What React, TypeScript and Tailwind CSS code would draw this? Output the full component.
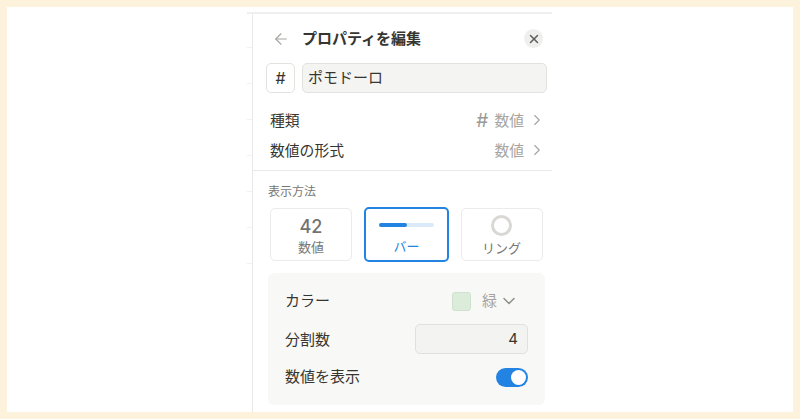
import { ArrowLeft, ChevronDown, ChevronRight, X } from 'lucide-react'

const font = { fontFamily: '"Noto Sans CJK JP", sans-serif' }
const latin = { fontFamily: 'Inter, sans-serif' }

const ticks = [1, 2, 3, 4, 5, 6, 7]

function Row({ label, value, hash }: { label: string; value: string; hash?: boolean }) {
    return (
        <div className="flex h-[30px] items-center justify-between pl-[17px] pr-[2px]">
            <span className="text-[14.8px] text-[#37352f]">{label}</span>
            <span className="flex items-center text-[14.8px] text-[#a5a4a0]">
                {hash && <span className="mr-[6px] text-[19px] leading-none text-[#9b9a97]" style={latin}>#</span>}
                {value}
                <ChevronRight className="ml-[4px] h-[18px] w-[18px]" strokeWidth={1.5} />
            </span>
        </div>
    )
}

export default function App() {
    return (
        <div className="h-[419px] w-[800px] overflow-hidden bg-[#fdf3dc] p-[7px]" style={font}>
            <div className="h-[405px] overflow-hidden bg-white pl-[240px]">
                <div className="flex h-full w-[305px] flex-col pt-[5px]">
                    <div className="h-[2px] bg-[#efefee]" />
                    <div className="flex flex-1">
                        <div className="flex w-[5px] flex-col gap-[35px] pt-[33px]">
                            {ticks.map((t) => (
                                <div key={t} className="h-[1px] bg-[#f1f1f0]" />
                            ))}
                        </div>
                        <div className="flex flex-1 flex-col border-l border-[#e9e9e7] pr-[4px]">
                            <div className="flex h-[49px] items-center pl-[19px] pr-[5px]">
                                <ArrowLeft className="h-[18px] w-[18px] text-[#a5a4a0]" strokeWidth={1.5} />
                                <span className="ml-[12px] flex-1 text-[15px] font-bold text-[#37352f]">プロパティを編集</span>
                                <span className="flex h-[19px] w-[19px] items-center justify-center rounded-full bg-[#efefed] text-[#5f5e5b]">
                                    <X className="h-[14px] w-[14px]" strokeWidth={2.5} />
                                </span>
                            </div>
                            <div className="flex gap-[7px] pl-[13px]">
                                <div className="flex h-[30px] w-[29px] items-center justify-center rounded-[5px] border border-[#e3e2df] text-[16px] text-[#37352f]" style={latin}>#</div>
                                <div className="flex h-[30px] w-[245px] items-center rounded-[5px] border border-[#e3e2df] bg-[#f4f4f2] pb-[1px] pl-[5px] text-[15px] text-[#37352f]">ポモドーロ</div>
                            </div>
                            <div className="mt-[12px]">
                                <Row label="種類" value="数値" hash />
                                <Row label="数値の形式" value="数値" />
                            </div>
                            <div className="-mr-[4px] mt-[5px] h-[1px] bg-[#e9e9e7]" />
                            <div className="mt-[11px] pl-[15px] text-[12px] leading-[18px] text-[#787774]">表示方法</div>
                            <div className="mt-[8px] flex gap-[12px] pl-[17px]">
                                <div className="flex h-[53px] w-[82px] flex-col items-center rounded-[5px] border border-[#ecebe9] pt-[7px]">
                                    <span className="text-[18px] font-medium leading-[22px] text-[#737373]" style={latin}>42</span>
                                    <span className="text-[13px] leading-[18px] text-[#787774]">数値</span>
                                </div>
                                <div className="-my-[1px] flex h-[55px] w-[85px] flex-col items-center rounded-[5px] border-2 border-[#2383e2] pt-[14px]">
                                    <div className="h-[4px] w-[55px] rounded-full bg-[#dbeafa]">
                                        <div className="h-[4px] w-[28px] rounded-full bg-[#2383e2]" />
                                    </div>
                                    <span className="mt-[10px] text-[13px] leading-[18px] text-[#2383e2]">バー</span>
                                </div>
                                <div className="flex h-[53px] w-[82px] flex-col items-center rounded-[5px] border border-[#ecebe9] pt-[6px] pr-[1px]">
                                    <div className="h-[21px] w-[21px] rounded-full border-[3px] border-[#d9d8d5]" />
                                    <span className="mt-[3px] text-[13px] leading-[18px] text-[#787774]">リング</span>
                                </div>
                            </div>
                            <div className="ml-[15px] mt-[12px] flex h-[132px] w-[277px] flex-col rounded-[6px] bg-[#f8f8f6] pl-[17px] pr-[17px] pt-[9px]">
                                <div className="flex h-[38px] items-center">
                                    <span className="flex-1 pb-[1px] text-[15px] text-[#37352f]">カラー</span>
                                    <span className="h-[19px] w-[19px] rounded-[3px] border border-[#d0e2cf] bg-[#dbecda]" />
                                    <span className="ml-[11px] pb-[1px] text-[15px] text-[#a5a4a0]">緑</span>
                                    <ChevronDown className="ml-[2px] mr-[9px] h-[20px] w-[20px] text-[#8f8e8a]" strokeWidth={1.75} />
                                </div>
                                <div className="flex h-[38px] items-center">
                                    <span className="flex-1 text-[15px] text-[#37352f]">分割数</span>
                                    <div className="flex h-[30px] w-[113px] items-center justify-end rounded-[5px] border border-[#e1e0dd] bg-[#f3f3f1] pr-[9px] text-[15px] text-[#37352f]" style={latin}>4</div>
                                </div>
                                <div className="flex h-[38px] items-center">
                                    <span className="flex-1 pb-[1px] text-[15px] text-[#37352f]">数値を表示</span>
                                    <div className="flex h-[19px] w-[32px] items-center justify-end rounded-full bg-[#2383e2] pr-[2px]">
                                        <div className="h-[15px] w-[15px] rounded-full bg-white" />
                                    </div>
                                </div>
                            </div>
                        </div>
                    </div>
                </div>
            </div>
        </div>
    )
}
